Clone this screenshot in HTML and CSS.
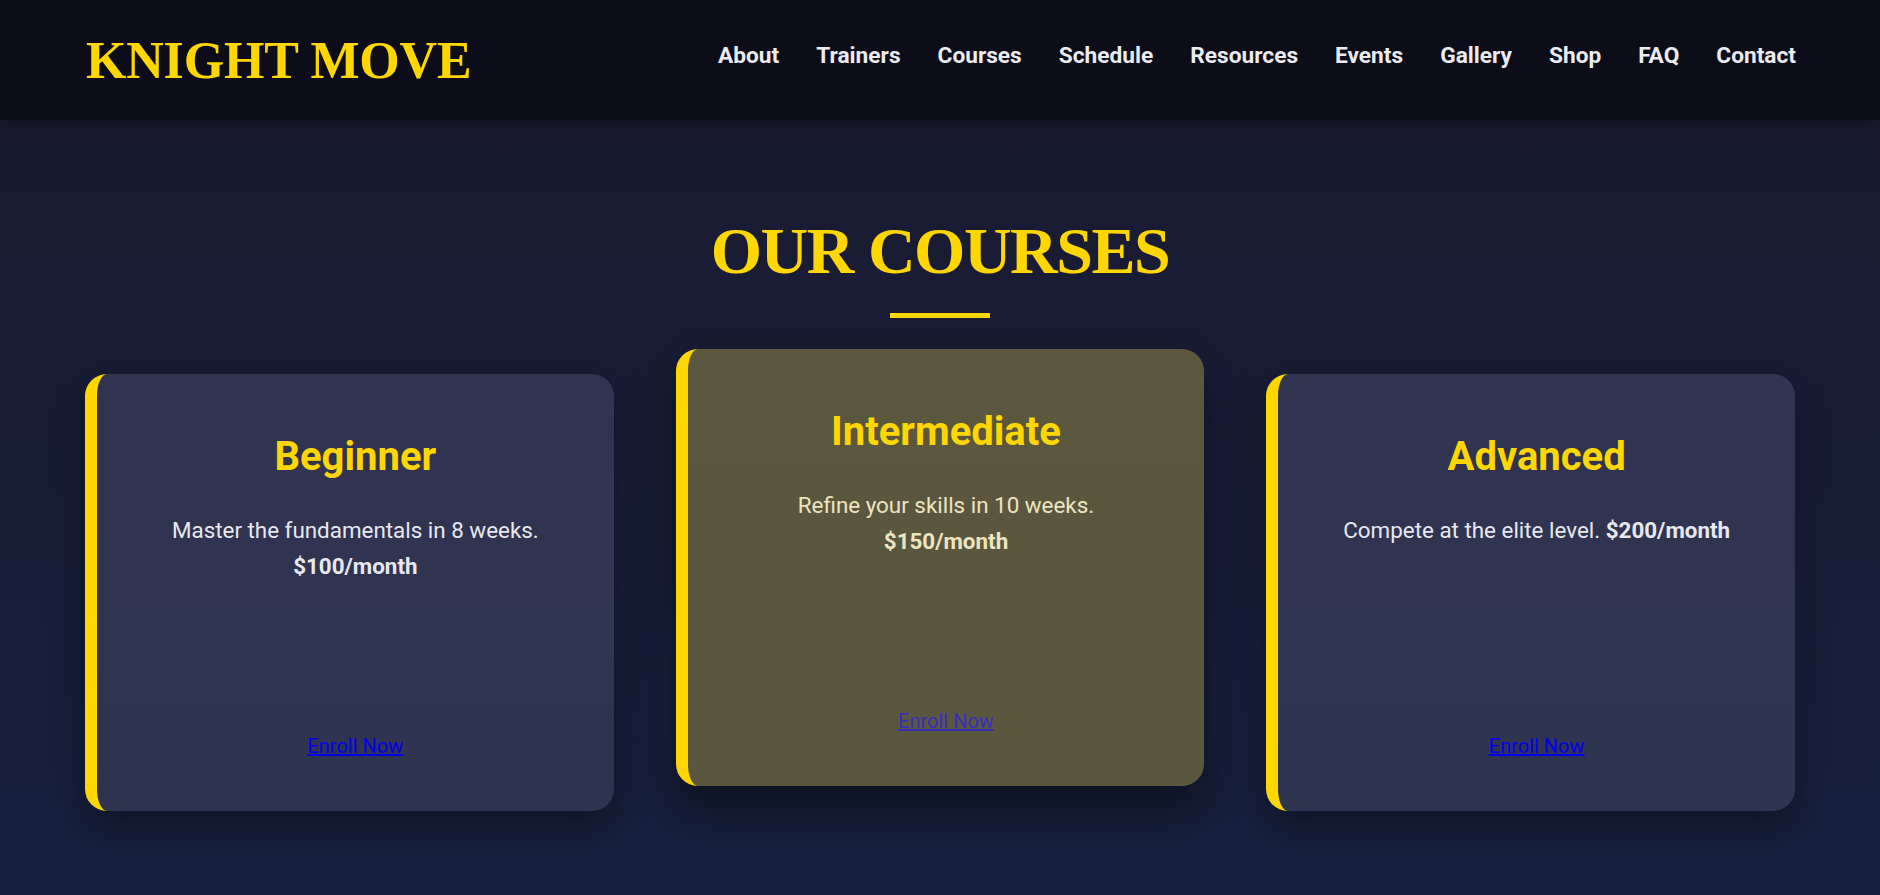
FILE: index.html
```html
<!DOCTYPE html>
<html lang="en">
<head>
<meta charset="utf-8">
<title>Knight Move – Our Courses</title>
<link rel="stylesheet" href="styles.css">
</head>
<body>
<header class="site-header">
  <div class="logo">KNIGHT MOVE</div>
  <nav>
    <ul class="nav-list">
      <li><a href="#">About</a></li>
      <li><a href="#">Trainers</a></li>
      <li><a href="#">Courses</a></li>
      <li><a href="#">Schedule</a></li>
      <li><a href="#">Resources</a></li>
      <li><a href="#">Events</a></li>
      <li><a href="#">Gallery</a></li>
      <li><a href="#">Shop</a></li>
      <li><a href="#">FAQ</a></li>
      <li><a href="#">Contact</a></li>
    </ul>
  </nav>
</header>
<main class="courses">
  <h2 class="section-title">OUR COURSES</h2>
  <div class="title-bar"></div>
  <div class="course-grid">
    <div class="card">
      <h3>Beginner</h3>
      <p>Master the fundamentals in 8 weeks. <strong>$100/month</strong></p>
      <a class="enroll" href="#">Enroll Now</a>
    </div>
    <div class="card card-active">
      <h3>Intermediate</h3>
      <p>Refine your skills in 10 weeks. <strong>$150/month</strong></p>
      <a class="enroll" href="#">Enroll Now</a>
    </div>
    <div class="card">
      <h3>Advanced</h3>
      <p>Compete at the elite level. <strong>$200/month</strong></p>
      <a class="enroll" href="#">Enroll Now</a>
    </div>
  </div>
</main>
</body>
</html>
```

FILE: styles.css
```css
* { box-sizing: border-box; }

html, body {
  margin: 0;
  padding: 0;
}

body {
  min-height: 100vh;
  background: linear-gradient(180deg, #1a1a2f 0%, #16203d 100%);
  font-family: Roboto, "Liberation Sans", sans-serif;
  color: #e8e8f0;
  overflow: hidden;
}

.site-header {
  height: 120px;
  padding: 0 84px 0 86px;
  display: flex;
  align-items: center;
  justify-content: space-between;
  background: #0c0d18;
  box-shadow: 0 4px 18px rgba(0, 0, 0, 0.35);
  position: relative;
  z-index: 2;
}

.logo {
  font-family: "Liberation Serif", "Times New Roman", serif;
  font-weight: 700;
  font-size: 52px;
  line-height: 1;
  color: #ffd700;
  padding-top: 2px;
  letter-spacing: -0.2px;
}

.nav-list {
  list-style: none;
  margin: 0;
  padding: 0 0 10px 0;
  display: flex;
  gap: 37px;
}

.nav-list a {
  color: #ebebf2;
  text-decoration: none;
  font-size: 22.7px;
  font-weight: 700;
}

.courses {
  padding: 98px 85px 0;
  display: flex;
  flex-direction: column;
  align-items: center;
}

.section-title {
  margin: 0;
  font-family: "Liberation Serif", "Times New Roman", serif;
  font-weight: 700;
  font-size: 66px;
  line-height: 1;
  letter-spacing: -1.5px;
  color: #ffd700;
}

.title-bar {
  width: 100px;
  height: 5px;
  margin-top: 29px;
  background: #ffd700;
}

.course-grid {
  margin-top: 56px;
  width: 100%;
  display: grid;
  grid-template-columns: repeat(3, 1fr);
  gap: 62px;
}

.card {
  position: relative;
  height: 437px;
  padding: 59px 56px 53px;
  display: flex;
  flex-direction: column;
  align-items: stretch;
  text-align: center;
  background: linear-gradient(180deg, #313450 0%, #2e3450 100%);
  border-left: 12px solid #ffd700;
  border-radius: 22px;
  box-shadow: 0 14px 34px rgba(0, 0, 0, 0.35);
}

.card h3 {
  margin: 0;
  font-size: 40px;
  line-height: 48px;
  font-weight: 700;
  color: #ffd700;
}

.card p {
  margin: 32px 0 0;
  font-size: 22.4px;
  line-height: 1.6;
}

.card p strong {
  font-weight: 700;
}

.enroll {
  margin-top: auto;
  align-self: center;
  font-size: 20px;
  color: #0000ee;
  text-decoration: underline;
}

.card-active {
  transform: translateY(-25px);
  box-shadow: 0 22px 44px rgba(0, 0, 0, 0.45);
}

.card-active::after {
  content: "";
  position: absolute;
  inset: 0;
  border-radius: 10px 22px 22px 10px / 22px 22px 22px 22px;
  background: rgba(255, 215, 0, 0.21);
  pointer-events: none;
}
```
